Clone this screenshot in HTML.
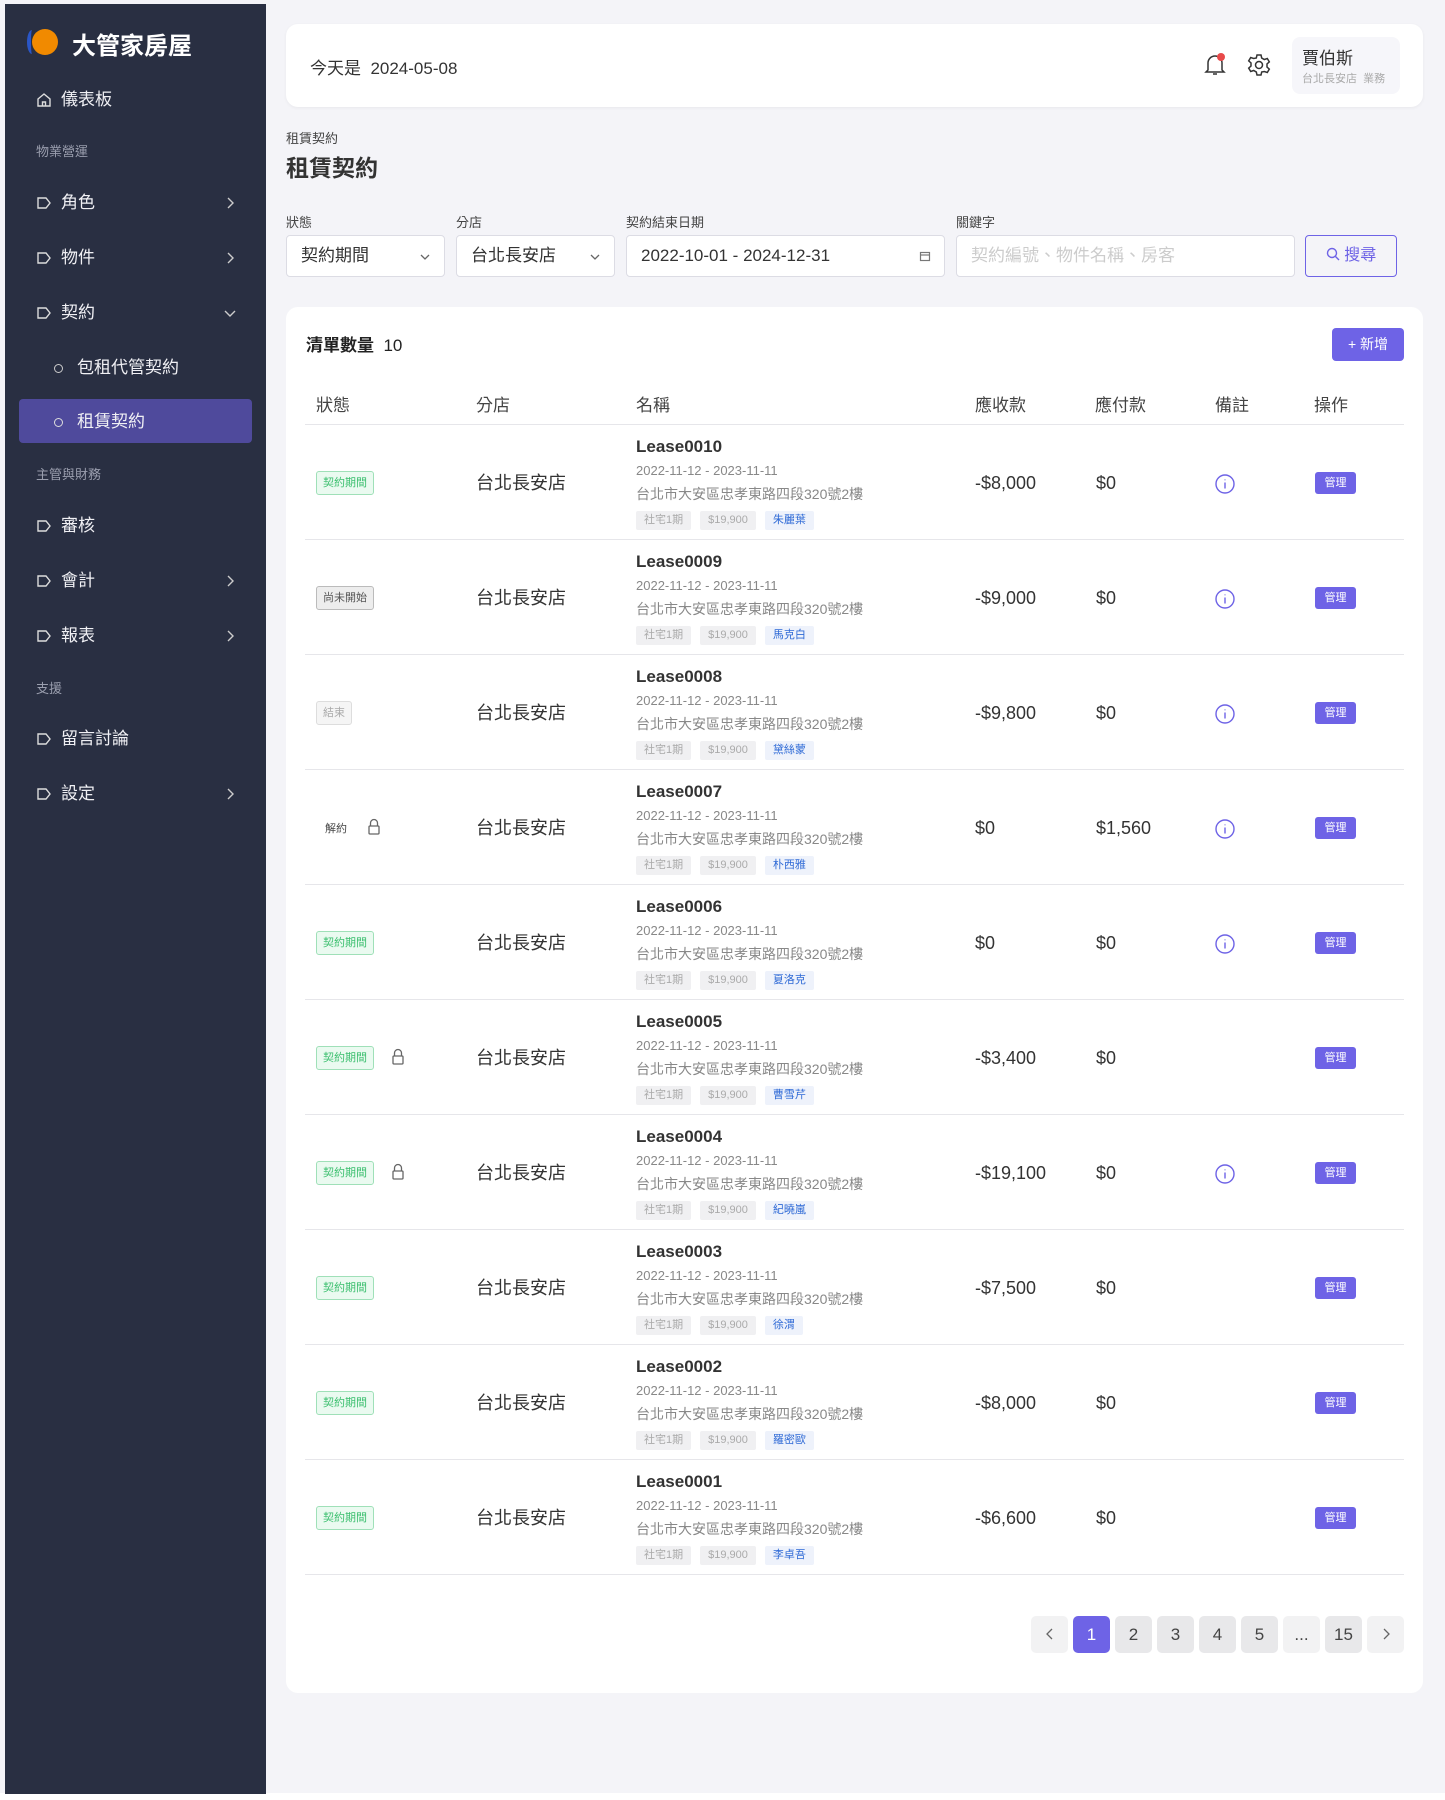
<!DOCTYPE html>
<html><head><meta charset="utf-8">
<style>
*{box-sizing:border-box;margin:0;padding:0}
body{width:1445px;height:1800px;background:#fff;font-family:"Liberation Sans","Noto Sans CJK TC",sans-serif;color:#333;position:relative;overflow:hidden}
.abs{position:absolute}
#bg{left:0;top:0;width:1445px;height:1793px;background:#f4f4f8}
#side{left:5px;top:4px;width:261px;height:1790px;background:#292f42;color:#fff}
.mi{position:absolute;left:0;width:261px;font-size:17px;color:#f0f0f4;height:24px;line-height:24px}
.mi .ic{position:absolute;left:31px;top:4px}
.mi .tx{position:absolute;left:56px}
.mi .ch{position:absolute;left:218px;top:5px}
.sec{position:absolute;left:31px;font-size:13px;color:#9a9eae}
.card{background:#fff;border-radius:12px}
.lbl{font-size:13px;color:#444}
.inp{background:#fff;border:1px solid #dcdce4;border-radius:4px;height:42px;font-size:17px;color:#333;padding-left:14px;line-height:40px}
.th{position:absolute;top:391px;font-size:17px;color:#444}
.row{position:absolute;left:305px;width:1099px;height:115px;border-bottom:1px solid #e6e6ea}
.row .c{position:absolute}
.badge{position:absolute;left:11px;top:46px;height:24px;line-height:22px;font-size:11px;padding:0 6px;border-radius:3px;border:1px solid}
.g{background:#eafaf0;color:#3bbf6e;border-color:#9fe0b8}
.n{background:#ededed;color:#555;border-color:#bbb}
.e{background:#f5f5f5;color:#aaa;border-color:#ddd}
.shop{left:171px;top:44px;font-size:18px;color:#333}
.nm{left:331px;top:12px;font-size:17px;font-weight:bold;color:#333}
.dt{left:331px;top:38px;font-size:13px;color:#888}
.ad{left:331px;top:59px;font-size:14px;color:#888}
.tags{left:331px;top:86px;display:flex;gap:9px}
.tags span{height:19px;line-height:19px;font-size:11px;padding:0 8px;background:#f0f0f2;color:#aaa;border-radius:2px}
.tags span.b{background:#eef2fb;color:#2f6ad6}
.ar{left:670px;top:48px;font-size:18px;color:#333}
.ap{left:791px;top:48px;font-size:18px;color:#333}
.info{left:909px;top:48px}
.mg{left:1010px;top:47px;width:41px;height:22px;background:#6e63e6;color:#fff;font-size:11px;line-height:22px;text-align:center;border-radius:3px}
.pg{position:absolute;top:1616px;width:37px;height:37px;border-radius:5px;background:#e8e8ea;color:#444;font-size:17px;text-align:center;line-height:37px}
</style></head><body>
<div id="bg" class="abs"></div>
<div id="side" class="abs">
  <div class="abs" style="left:22px;top:24px;width:30px;height:28px">
    <div class="abs" style="left:0;top:2px;width:10px;height:24px;border-left:4px solid #2a56c6;border-radius:50%"></div>
    <div class="abs" style="left:5px;top:1px;width:26px;height:26px;border-radius:50%;background:#f18a00"></div>
  </div>
  <div class="abs" style="left:67px;top:22px;font-size:24px;font-weight:bold;color:#fff">大管家房屋</div>
  <div class="mi" style="top:84px"><svg class="ic" width="16" height="16" viewBox="0 0 16 16" fill="none" stroke="#ddd" stroke-width="1.4"><path d="M2 7L8 2l6 5v7H2z M6.5 14v-4h3v4"/></svg><span class="tx">儀表板</span></div>
  <div class="sec" style="top:137px">物業營運</div>
  <div class="mi" style="top:187px"><svg class="ic" width="16" height="16" viewBox="0 0 16 16" fill="none" stroke="#ddd" stroke-width="1.4"><path d="M2 3h8l4 5-4 5H2z"/></svg><span class="tx">角色</span><svg class="ch" width="14" height="14" viewBox="0 0 14 14" fill="none" stroke="#ccc" stroke-width="1.4"><path d="M5 2l5 5-5 5"/></svg></div>
  <div class="mi" style="top:242px"><svg class="ic" width="16" height="16" viewBox="0 0 16 16" fill="none" stroke="#ddd" stroke-width="1.4"><path d="M2 3h8l4 5-4 5H2z"/></svg><span class="tx">物件</span><svg class="ch" width="14" height="14" viewBox="0 0 14 14" fill="none" stroke="#ccc" stroke-width="1.4"><path d="M5 2l5 5-5 5"/></svg></div>
  <div class="mi" style="top:297px"><svg class="ic" width="16" height="16" viewBox="0 0 16 16" fill="none" stroke="#ddd" stroke-width="1.4"><path d="M2 3h8l4 5-4 5H2z"/></svg><span class="tx">契約</span><svg class="ch" width="14" height="14" viewBox="0 0 14 14" fill="none" stroke="#ccc" stroke-width="1.4"><path d="M2 5l5 5 5-5"/></svg></div>
  <div class="mi" style="top:352px"><span class="abs" style="left:49px;top:8px;width:9px;height:9px;border:1.3px solid #ccc;border-radius:50%"></span><span class="tx" style="left:72px">包租代管契約</span></div>
  <div class="abs" style="left:14px;top:395px;width:233px;height:44px;background:#4f4a9c;border-radius:4px"></div>
  <div class="mi" style="top:406px"><span class="abs" style="left:49px;top:8px;width:9px;height:9px;border:1.3px solid #ddd;border-radius:50%"></span><span class="tx" style="left:72px">租賃契約</span></div>
  <div class="sec" style="top:460px">主管與財務</div>
  <div class="mi" style="top:510px"><svg class="ic" width="16" height="16" viewBox="0 0 16 16" fill="none" stroke="#ddd" stroke-width="1.4"><path d="M2 3h8l4 5-4 5H2z"/></svg><span class="tx">審核</span></div>
  <div class="mi" style="top:565px"><svg class="ic" width="16" height="16" viewBox="0 0 16 16" fill="none" stroke="#ddd" stroke-width="1.4"><path d="M2 3h8l4 5-4 5H2z"/></svg><span class="tx">會計</span><svg class="ch" width="14" height="14" viewBox="0 0 14 14" fill="none" stroke="#ccc" stroke-width="1.4"><path d="M5 2l5 5-5 5"/></svg></div>
  <div class="mi" style="top:620px"><svg class="ic" width="16" height="16" viewBox="0 0 16 16" fill="none" stroke="#ddd" stroke-width="1.4"><path d="M2 3h8l4 5-4 5H2z"/></svg><span class="tx">報表</span><svg class="ch" width="14" height="14" viewBox="0 0 14 14" fill="none" stroke="#ccc" stroke-width="1.4"><path d="M5 2l5 5-5 5"/></svg></div>
  <div class="sec" style="top:674px">支援</div>
  <div class="mi" style="top:723px"><svg class="ic" width="16" height="16" viewBox="0 0 16 16" fill="none" stroke="#ddd" stroke-width="1.4"><path d="M2 3h8l4 5-4 5H2z"/></svg><span class="tx">留言討論</span></div>
  <div class="mi" style="top:778px"><svg class="ic" width="16" height="16" viewBox="0 0 16 16" fill="none" stroke="#ddd" stroke-width="1.4"><path d="M2 3h8l4 5-4 5H2z"/></svg><span class="tx">設定</span><svg class="ch" width="14" height="14" viewBox="0 0 14 14" fill="none" stroke="#ccc" stroke-width="1.4"><path d="M5 2l5 5-5 5"/></svg></div>
</div>

<div class="abs card" style="left:286px;top:24px;width:1137px;height:83px;box-shadow:0 1px 3px rgba(0,0,0,.05)"></div>
<div class="abs" style="left:310px;top:54px;font-size:17px;color:#333">今天是&nbsp; 2024-05-08</div>
<svg class="abs" style="left:1203px;top:52px" width="24" height="26" viewBox="0 0 24 26" fill="none" stroke="#333" stroke-width="1.5"><path d="M5 18V11a7 7 0 0 1 14 0v7l2 2H3z M10 22h4"/><circle cx="18" cy="5" r="4" fill="#e84a4a" stroke="none"/></svg>
<svg class="abs" style="left:1247px;top:53px" width="24" height="24" viewBox="0 0 24 24" fill="none" stroke="#333" stroke-width="1.5"><circle cx="12" cy="12" r="3.5"/><path d="M10 2h4l.7 3 2.6 1.5 3-1 2 3.4-2.3 2.1v3l2.3 2.1-2 3.4-3-1L14.7 19 14 22h-4l-.7-3-2.6-1.5-3 1-2-3.4L4 13v-3L1.7 7.9l2-3.4 3 1L9.3 5z"/></svg>
<div class="abs" style="left:1292px;top:37px;width:108px;height:57px;background:#f6f6fa;border-radius:8px"></div>
<div class="abs" style="left:1302px;top:44px;font-size:17px;color:#333">賈伯斯</div>
<div class="abs" style="left:1302px;top:70px;font-size:11px;color:#aaa">台北長安店&nbsp; 業務</div>

<div class="abs" style="left:286px;top:128px;font-size:13px;color:#444">租賃契約</div>
<div class="abs" style="left:286px;top:149px;font-size:23px;font-weight:bold;color:#333">租賃契約</div>

<div class="abs lbl" style="left:286px;top:212px">狀態</div>
<div class="abs lbl" style="left:456px;top:212px">分店</div>
<div class="abs lbl" style="left:626px;top:212px">契約結束日期</div>
<div class="abs lbl" style="left:956px;top:212px">關鍵字</div>
<div class="abs inp" style="left:286px;top:235px;width:159px">契約期間<svg class="abs" style="left:132px;top:15px" width="12" height="12" viewBox="0 0 12 12" fill="none" stroke="#666" stroke-width="1.3"><path d="M2 4l4 4 4-4"/></svg></div>
<div class="abs inp" style="left:456px;top:235px;width:159px">台北長安店<svg class="abs" style="left:132px;top:15px" width="12" height="12" viewBox="0 0 12 12" fill="none" stroke="#666" stroke-width="1.3"><path d="M2 4l4 4 4-4"/></svg></div>
<div class="abs inp" style="left:626px;top:235px;width:319px">2022-10-01 - 2024-12-31<svg class="abs" style="left:292px;top:14px" width="12" height="12" viewBox="0 0 12 12" fill="none" stroke="#777" stroke-width="1.2"><rect x="1.5" y="2.5" width="9" height="8"/><path d="M1.5 5h9"/></svg></div>
<div class="abs inp" style="left:956px;top:235px;width:339px;color:#ccc">契約編號、物件名稱、房客</div>
<div class="abs" style="left:1305px;top:235px;width:92px;height:42px;border:1px solid #6e63e6;border-radius:4px;color:#6e63e6;font-size:16px;line-height:40px;text-align:center"><svg width="14" height="14" viewBox="0 0 14 14" fill="none" stroke="#6e63e6" stroke-width="1.4" style="vertical-align:-1px"><circle cx="6" cy="6" r="4.5"/><path d="M9.5 9.5L13 13"/></svg> 搜尋</div>

<div class="abs card" style="left:286px;top:307px;width:1137px;height:386px"></div>
<div class="abs card" style="left:286px;top:600px;width:1137px;height:1093px"></div>
<div class="abs" style="left:306px;top:331px;font-size:17px;color:#222"><b>清單數量</b>&nbsp; 10</div>
<div class="abs" style="left:1332px;top:328px;width:72px;height:33px;background:#6e63e6;border-radius:4px;color:#fff;font-size:14px;line-height:33px;text-align:center">+ 新增</div>

<div class="th" style="left:316px">狀態</div>
<div class="th" style="left:476px">分店</div>
<div class="th" style="left:636px">名稱</div>
<div class="th" style="left:975px">應收款</div>
<div class="th" style="left:1095px">應付款</div>
<div class="th" style="left:1215px">備註</div>
<div class="th" style="left:1314px">操作</div>
<div class="abs" style="left:305px;top:424px;width:1099px;height:1px;background:#e6e6ea"></div>

<div class="row" style="top:425px"><span class="badge g">契約期間</span><span class="c shop">台北長安店</span><span class="c nm">Lease0010</span><span class="c dt">2022-11-12 - 2023-11-11</span><span class="c ad">台北市大安區忠孝東路四段320號2樓</span><div class="c tags"><span>社宅1期</span><span>$19,900</span><span class="b">朱麗葉</span></div><span class="c ar">-$8,000</span><span class="c ap">$0</span><svg class="c info" width="22" height="22" viewBox="0 0 22 22" fill="none" stroke="#6e63e6" stroke-width="1.4"><circle cx="11" cy="11" r="9"/><path d="M11 9.5v6M11 6.5v.8"/></svg><span class="c mg">管理</span></div>
<div class="row" style="top:540px"><span class="badge n">尚未開始</span><span class="c shop">台北長安店</span><span class="c nm">Lease0009</span><span class="c dt">2022-11-12 - 2023-11-11</span><span class="c ad">台北市大安區忠孝東路四段320號2樓</span><div class="c tags"><span>社宅1期</span><span>$19,900</span><span class="b">馬克白</span></div><span class="c ar">-$9,000</span><span class="c ap">$0</span><svg class="c info" width="22" height="22" viewBox="0 0 22 22" fill="none" stroke="#6e63e6" stroke-width="1.4"><circle cx="11" cy="11" r="9"/><path d="M11 9.5v6M11 6.5v.8"/></svg><span class="c mg">管理</span></div>
<div class="row" style="top:655px"><span class="badge e">結束</span><span class="c shop">台北長安店</span><span class="c nm">Lease0008</span><span class="c dt">2022-11-12 - 2023-11-11</span><span class="c ad">台北市大安區忠孝東路四段320號2樓</span><div class="c tags"><span>社宅1期</span><span>$19,900</span><span class="b">黛絲蒙</span></div><span class="c ar">-$9,800</span><span class="c ap">$0</span><svg class="c info" width="22" height="22" viewBox="0 0 22 22" fill="none" stroke="#6e63e6" stroke-width="1.4"><circle cx="11" cy="11" r="9"/><path d="M11 9.5v6M11 6.5v.8"/></svg><span class="c mg">管理</span></div>
<div class="row" style="top:770px"><span class="c" style="left:20px;top:50px;font-size:11px;color:#444">解約</span><svg class="c" style="left:62px;top:48px" width="14" height="18" viewBox="0 0 14 18" fill="none" stroke="#666" stroke-width="1.3"><path d="M3.5 8V5a3.5 3.5 0 0 1 7 0v3"/><rect x="2" y="8" width="10" height="8" rx="1"/></svg><span class="c shop">台北長安店</span><span class="c nm">Lease0007</span><span class="c dt">2022-11-12 - 2023-11-11</span><span class="c ad">台北市大安區忠孝東路四段320號2樓</span><div class="c tags"><span>社宅1期</span><span>$19,900</span><span class="b">朴西雅</span></div><span class="c ar">$0</span><span class="c ap">$1,560</span><svg class="c info" width="22" height="22" viewBox="0 0 22 22" fill="none" stroke="#6e63e6" stroke-width="1.4"><circle cx="11" cy="11" r="9"/><path d="M11 9.5v6M11 6.5v.8"/></svg><span class="c mg">管理</span></div>
<div class="row" style="top:885px"><span class="badge g">契約期間</span><span class="c shop">台北長安店</span><span class="c nm">Lease0006</span><span class="c dt">2022-11-12 - 2023-11-11</span><span class="c ad">台北市大安區忠孝東路四段320號2樓</span><div class="c tags"><span>社宅1期</span><span>$19,900</span><span class="b">夏洛克</span></div><span class="c ar">$0</span><span class="c ap">$0</span><svg class="c info" width="22" height="22" viewBox="0 0 22 22" fill="none" stroke="#6e63e6" stroke-width="1.4"><circle cx="11" cy="11" r="9"/><path d="M11 9.5v6M11 6.5v.8"/></svg><span class="c mg">管理</span></div>
<div class="row" style="top:1000px"><span class="badge g">契約期間</span><svg class="c" style="left:86px;top:48px" width="14" height="18" viewBox="0 0 14 18" fill="none" stroke="#666" stroke-width="1.3"><path d="M3.5 8V5a3.5 3.5 0 0 1 7 0v3"/><rect x="2" y="8" width="10" height="8" rx="1"/></svg><span class="c shop">台北長安店</span><span class="c nm">Lease0005</span><span class="c dt">2022-11-12 - 2023-11-11</span><span class="c ad">台北市大安區忠孝東路四段320號2樓</span><div class="c tags"><span>社宅1期</span><span>$19,900</span><span class="b">曹雪芹</span></div><span class="c ar">-$3,400</span><span class="c ap">$0</span><span class="c mg">管理</span></div>
<div class="row" style="top:1115px"><span class="badge g">契約期間</span><svg class="c" style="left:86px;top:48px" width="14" height="18" viewBox="0 0 14 18" fill="none" stroke="#666" stroke-width="1.3"><path d="M3.5 8V5a3.5 3.5 0 0 1 7 0v3"/><rect x="2" y="8" width="10" height="8" rx="1"/></svg><span class="c shop">台北長安店</span><span class="c nm">Lease0004</span><span class="c dt">2022-11-12 - 2023-11-11</span><span class="c ad">台北市大安區忠孝東路四段320號2樓</span><div class="c tags"><span>社宅1期</span><span>$19,900</span><span class="b">紀曉嵐</span></div><span class="c ar">-$19,100</span><span class="c ap">$0</span><svg class="c info" width="22" height="22" viewBox="0 0 22 22" fill="none" stroke="#6e63e6" stroke-width="1.4"><circle cx="11" cy="11" r="9"/><path d="M11 9.5v6M11 6.5v.8"/></svg><span class="c mg">管理</span></div>
<div class="row" style="top:1230px"><span class="badge g">契約期間</span><span class="c shop">台北長安店</span><span class="c nm">Lease0003</span><span class="c dt">2022-11-12 - 2023-11-11</span><span class="c ad">台北市大安區忠孝東路四段320號2樓</span><div class="c tags"><span>社宅1期</span><span>$19,900</span><span class="b">徐渭</span></div><span class="c ar">-$7,500</span><span class="c ap">$0</span><span class="c mg">管理</span></div>
<div class="row" style="top:1345px"><span class="badge g">契約期間</span><span class="c shop">台北長安店</span><span class="c nm">Lease0002</span><span class="c dt">2022-11-12 - 2023-11-11</span><span class="c ad">台北市大安區忠孝東路四段320號2樓</span><div class="c tags"><span>社宅1期</span><span>$19,900</span><span class="b">羅密歐</span></div><span class="c ar">-$8,000</span><span class="c ap">$0</span><span class="c mg">管理</span></div>
<div class="row" style="top:1460px"><span class="badge g">契約期間</span><span class="c shop">台北長安店</span><span class="c nm">Lease0001</span><span class="c dt">2022-11-12 - 2023-11-11</span><span class="c ad">台北市大安區忠孝東路四段320號2樓</span><div class="c tags"><span>社宅1期</span><span>$19,900</span><span class="b">李卓吾</span></div><span class="c ar">-$6,600</span><span class="c ap">$0</span><span class="c mg">管理</span></div>

<div class="pg" style="left:1031px;background:#f2f2f3"><svg width="12" height="14" viewBox="0 0 12 14" fill="none" stroke="#666" stroke-width="1.3" style="vertical-align:-1px"><path d="M8 2L3 7l5 5"/></svg></div>
<div class="pg" style="left:1073px;background:#6e63e6;color:#fff">1</div>
<div class="pg" style="left:1115px">2</div>
<div class="pg" style="left:1157px">3</div>
<div class="pg" style="left:1199px">4</div>
<div class="pg" style="left:1241px">5</div>
<div class="pg" style="left:1283px;background:#f2f2f3">...</div>
<div class="pg" style="left:1325px">15</div>
<div class="pg" style="left:1367px;background:#f2f2f3"><svg width="12" height="14" viewBox="0 0 12 14" fill="none" stroke="#666" stroke-width="1.3" style="vertical-align:-1px"><path d="M4 2l5 5-5 5"/></svg></div>
</body></html>
